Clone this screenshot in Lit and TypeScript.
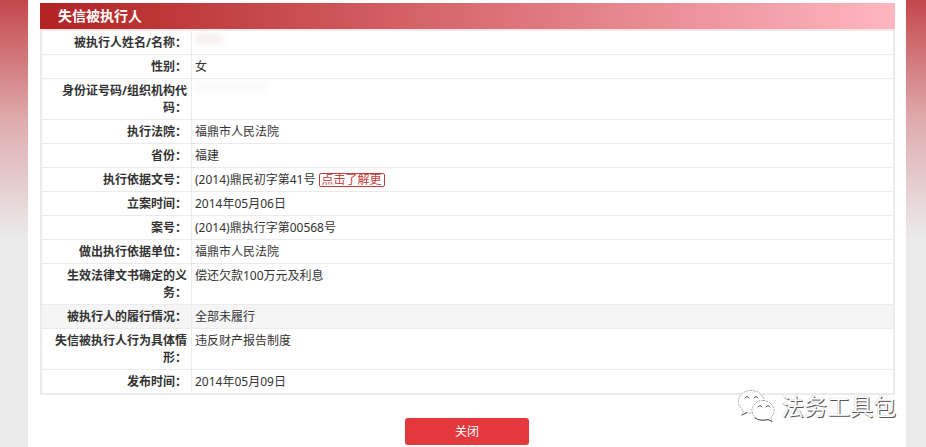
import { LitElement, html, css, nothing } from "lit";
import { customElement } from "lit/decorators.js";

interface Row {
  label: string;
  value: string;
  more?: boolean;
  redacted?: "name" | "id";
  active?: boolean;
}

const ROWS: Row[] = [
  { label: "被执行人姓名/名称：", value: "", redacted: "name" },
  { label: "性别：", value: "女" },
  { label: "身份证号码/组织机构代码：", value: "", redacted: "id" },
  { label: "执行法院：", value: "福鼎市人民法院" },
  { label: "省份：", value: "福建" },
  { label: "执行依据文号：", value: "(2014)鼎民初字第41号", more: true },
  { label: "立案时间：", value: "2014年05月06日" },
  { label: "案号：", value: "(2014)鼎执行字第00568号" },
  { label: "做出执行依据单位：", value: "福鼎市人民法院" },
  { label: "生效法律文书确定的义务：", value: "偿还欠款100万元及利息" },
  { label: "被执行人的履行情况：", value: "全部未履行", active: true },
  { label: "失信被执行人行为具体情形：", value: "违反财产报告制度" },
  { label: "发布时间：", value: "2014年05月09日" },
];

@customElement("app-root")
export class AppRoot extends LitElement {
  static styles = css`
    :host {
      display: block;
      min-height: 100vh;
      box-sizing: border-box;
      padding: 0 20px 0 28px;
      background: #ebebeb linear-gradient(#c4484b, #dfabad 120px, #ebebeb 240px) no-repeat;
      font: 12px/17px "Noto Sans", "Noto Sans CJK SC", sans-serif;
      color: #333;
    }
    .panel {
      position: relative;
      box-sizing: border-box;
      min-height: 100vh;
      padding: 3px 11px 2px 12px;
      background: #fff;
    }
    .title {
      margin: 0;
      padding: 0 18px;
      font-size: 14px;
      line-height: 26px;
      font-weight: 700;
      color: #fff;
      background: linear-gradient(to right, #b22222, #ffb6c1);
    }
    .details {
      width: 100%;
      border-collapse: separate;
      border-spacing: 0;
      table-layout: fixed;
      border: 2px solid #ebebeb;
      border-top-color: #f7e6e8;
      box-sizing: border-box;
    }
    .label,
    .value {
      padding: 3px 4px;
      vertical-align: top;
      border-bottom: 1px solid #ebebeb;
    }
    .label {
      width: 141px;
      text-align: right;
      font-weight: 700;
      border-right: 1px solid #ebebeb;
    }
    .value {
      padding-left: 3px;
      text-align: left;
    }
    .row:last-child > * {
      border-bottom: 0;
    }
    .active {
      background: #f5f5f5;
    }
    .more {
      display: inline-block;
      height: 12px;
      padding: 0 2px;
      line-height: 12px;
      color: #c33c3f;
      border: 1px solid #c33c3f;
      border-radius: 2px;
      text-decoration: none;
    }
    .smudge {
      display: block;
      height: 10px;
      border-radius: 5px;
      filter: blur(3px);
    }
    .name {
      width: 28px;
      background: #f5eeee;
    }
    .id {
      width: 72px;
      background: #fafafa;
    }
    .actions {
      display: flex;
      justify-content: center;
      padding: 23px 1px 0 0;
    }
    .close {
      width: 124px;
      height: 27px;
      padding: 0;
      border: 0;
      border-radius: 3px;
      background: #e4393c;
      color: #fff;
      font: inherit;
    }
    .watermark {
      position: absolute;
      right: 10px;
      bottom: 24px;
      display: flex;
      align-items: center;
      gap: 6px;
      color: #fff;
      font-size: 23px;
      line-height: 34px;
      text-shadow: 1px 1px 0 #555, 0 0 1px #aaa;
    }
    .chat {
      width: 38px;
      height: 34px;
    }
  `;

  private renderRow(row: Row) {
    return html`<tr class="row ${row.active ? "active" : ""}">
      <th class="label" scope="row">${row.label}</th>
      <td class="value">
        ${row.redacted ? html`<span class="smudge ${row.redacted}"></span>` : row.value}
        ${row.more ? html`<a class="more" href="#">点击了解更</a>` : nothing}
      </td>
    </tr>`;
  }

  render() {
    return html`<main class="panel">
      <h1 class="title">失信被执行人</h1>
      <table class="details">
        <tbody>
          ${ROWS.map((row) => this.renderRow(row))}
        </tbody>
      </table>
      <div class="actions"><button class="close" type="button">关闭</button></div>
      <div class="watermark">
        <svg class="chat" viewBox="0 0 38 34" fill="#fff" stroke="#999" stroke-width="1" stroke-linecap="round" aria-hidden="true">
          <path stroke-dasharray="1 2" d="M14 1.500C7 1.500 1.500 6 1.500 12.500c0 4 2 7 5 9L5 26l5-2.500c3 1 6 1 9 0 5-2 8-6 8-11C27 6 21 1.500 14 1.500Z" />
          <path d="M8 9q2-3 4 0M17 9q2-3 4 0" fill="none" stroke="#555" />
          <path stroke-dasharray="1 2" d="M26 11.500c-6 0-11 4.500-11 10s5 10 11 10q3 0 5-1l4 2-1-4c2-2 3-4 3-7 0-5.500-5-10-11-10Z" />
          <path d="M21 18q2-3 4 0M29 18q2-3 4 0" fill="none" stroke="#555" />
          <path d="M5 26l5-2.500M18 29q5 3.500 13 1.500l4 2" fill="none" stroke="#555" />
        </svg>
        <span>法务工具包</span>
      </div>
    </main>`;
  }
}
